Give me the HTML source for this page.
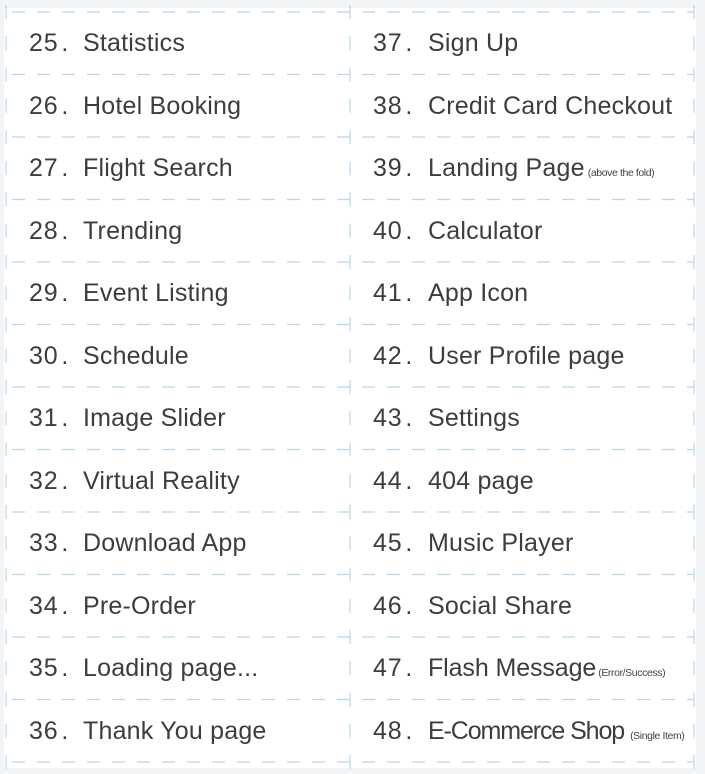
<!DOCTYPE html>
<html><head><meta charset="utf-8"><style>
html,body{margin:0;padding:0;width:705px;height:774px;overflow:hidden;background:#f3f4f5;}
.card{position:absolute;left:4px;top:8px;width:692px;height:760px;background:#fff;}
svg{position:absolute;left:0;top:0;}
.t{position:absolute;font-family:"Liberation Sans",sans-serif;font-size:25px;letter-spacing:0.2px;color:#3d3d3d;white-space:nowrap;line-height:1;}
.n{letter-spacing:0.8px;}
.s{font-size:10.5px;letter-spacing:-0.4px;color:#444;margin-left:3px;}
</style></head><body>
<div class="card"></div>
<svg width="705" height="774">
<g stroke="#b9d7e6" stroke-width="1.2" fill="none">
<line x1="6" y1="12" x2="694" y2="12" stroke-dasharray="13 12" stroke-dashoffset="-6"/>
<line x1="6" y1="74.5" x2="694" y2="74.5" stroke-dasharray="13 12" stroke-dashoffset="-6"/>
<line x1="6" y1="137" x2="694" y2="137" stroke-dasharray="13 12" stroke-dashoffset="-6"/>
<line x1="6" y1="199.5" x2="694" y2="199.5" stroke-dasharray="13 12" stroke-dashoffset="-6"/>
<line x1="6" y1="262" x2="694" y2="262" stroke-dasharray="13 12" stroke-dashoffset="-6"/>
<line x1="6" y1="324.5" x2="694" y2="324.5" stroke-dasharray="13 12" stroke-dashoffset="-6"/>
<line x1="6" y1="387" x2="694" y2="387" stroke-dasharray="13 12" stroke-dashoffset="-6"/>
<line x1="6" y1="449.5" x2="694" y2="449.5" stroke-dasharray="13 12" stroke-dashoffset="-6"/>
<line x1="6" y1="512" x2="694" y2="512" stroke-dasharray="13 12" stroke-dashoffset="-6"/>
<line x1="6" y1="574.5" x2="694" y2="574.5" stroke-dasharray="13 12" stroke-dashoffset="-6"/>
<line x1="6" y1="637" x2="694" y2="637" stroke-dasharray="13 12" stroke-dashoffset="-6"/>
<line x1="6" y1="699.5" x2="694" y2="699.5" stroke-dasharray="13 12" stroke-dashoffset="-6"/>
<line x1="6" y1="762" x2="694" y2="762" stroke-dasharray="13 12" stroke-dashoffset="-6"/>
<line x1="6" y1="5" x2="6" y2="770" stroke-dasharray="14 17.25"/>
<line x1="350" y1="5" x2="350" y2="770" stroke-dasharray="14 17.25"/>
<line x1="694" y1="5" x2="694" y2="770" stroke-dasharray="14 17.25"/>
</g></svg>
<div id="c"></div>
<script>
var L=["Statistics","Hotel Booking","Flight Search","Trending","Event Listing","Schedule","Image Slider","Virtual Reality","Download App","Pre-Order","Loading page...","Thank You page"];
var R=["Sign Up","Credit Card Checkout",'Landing Page<span class="s">(above the fold)</span>',"Calculator","App Icon","User Profile page","Settings","404 page","Music Player","Social Share",'<span style="letter-spacing:-0.1px">Flash Message</span><span class="s" style="margin-left:2px">(Error/Success)</span>','<span style="letter-spacing:-1.1px">E-Commerce Shop</span><span class="s" style="margin-left:6px">(Single Item)</span>'];
var h="";
for(var i=0;i<12;i++){var y=31+i*62.5;
h+='<div class="t n" style="left:29px;top:'+y+'px">'+(25+i)+'<span style="margin-left:3px">.</span></div><div class="t" style="left:83px;top:'+y+'px">'+L[i]+'</div>';
h+='<div class="t n" style="left:373px;top:'+y+'px">'+(37+i)+'<span style="margin-left:3px">.</span></div><div class="t" style="left:428px;top:'+y+'px">'+R[i]+'</div>';}
document.getElementById("c").innerHTML=h;
</script>
</body></html>
